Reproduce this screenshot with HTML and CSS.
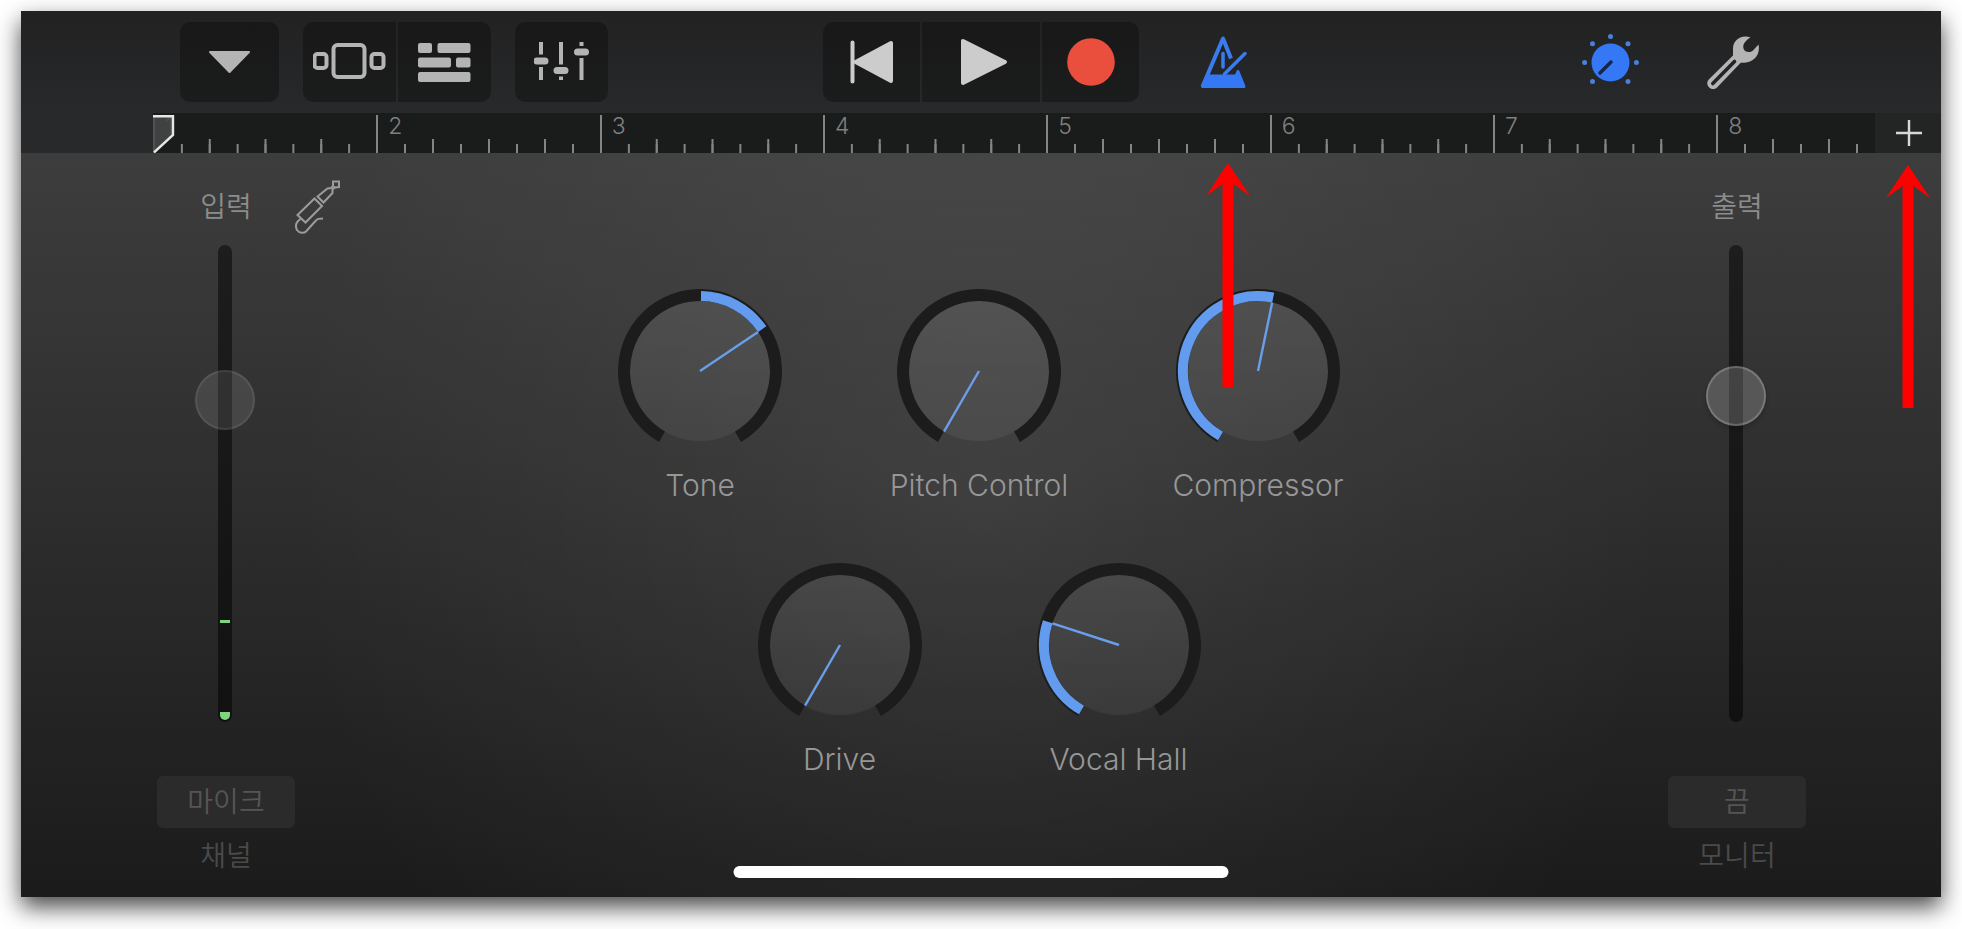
FILE: index.html
```html
<!DOCTYPE html>
<html lang="ko">
<head>
<meta charset="utf-8">
<meta name="viewport" content="width=device-width, initial-scale=1">
<title>GarageBand</title>
<link rel="stylesheet" href="styles.css">
</head>
<body>
<main class="app">
  <header class="toolbar">
    <div class="toolbar-left">
      <div class="group">
        <button class="tool tool-menu" type="button" aria-label="메뉴">
          <svg width="44" height="24" viewBox="0 0 44 24"><path d="M2 2H41L21.500 22z" fill="#b4b4b4" stroke="#b4b4b4" stroke-width="2" stroke-linejoin="round"/></svg>
        </button>
      </div>
      <div class="group">
        <button class="tool" type="button" aria-label="브라우저">
          <svg width="74" height="38" viewBox="1 1 74 38" fill="none" stroke="#b4b4b4" stroke-width="4"><rect x="2.500" y="12" width="12" height="14" rx="3"/><rect x="21.500" y="3" width="31" height="32" rx="4"/><rect x="59.500" y="12" width="12" height="14" rx="3"/></svg>
        </button>
        <button class="tool" type="button" aria-label="트랙">
          <svg width="53" height="39" viewBox="0 0 53 39" fill="#b4b4b4"><rect width="14" height="10" rx="2"/><rect x="19.500" width="33" height="10" rx="2"/><rect y="14.500" width="33" height="10" rx="2"/><rect x="38" y="14.500" width="14.500" height="10" rx="2"/><rect y="29" width="52.500" height="10" rx="2"/></svg>
        </button>
      </div>
      <div class="group">
        <button class="tool" type="button" aria-label="믹서">
          <svg width="56" height="40" viewBox="1 1 56 40" stroke="#b4b4b4" stroke-linecap="round" fill="none"><path stroke-width="4" stroke-linecap="butt" d="M8 1V13.500M8 26V39M28 1V23.500M28 35.500V39M48.500 1V5M48.500 17V39"/><path stroke-width="7" d="M4 20H12M24 29.500H32M44.500 11H52.500"/></svg>
        </button>
      </div>
    </div>
    <div class="group">
      <button class="tool tool-side" type="button" aria-label="처음으로">
        <svg width="44" height="44" viewBox="0 0 44 44" fill="#ccc" stroke="#ccc" stroke-linejoin="round" stroke-linecap="round"><path stroke-width="4" d="M2.500 2.500V41.500"/><path stroke-width="4" d="M5.500 22L41 3V41z"/></svg>
      </button>
      <button class="tool tool-play" type="button" aria-label="재생">
        <svg width="48" height="48" viewBox="0 0 48 48"><path d="M3 3V45L45 24z" fill="#ccc" stroke="#ccc" stroke-width="4" stroke-linejoin="round"/></svg>
      </button>
      <button class="tool tool-side" type="button" aria-label="녹음">
        <svg width="48" height="48" viewBox="0 0 48 48"><circle cx="24" cy="24" r="23.800" fill="#ea4f3e"/></svg>
      </button>
    </div>
    <div class="toolbar-right">
      <button class="plain" type="button" aria-label="메트로놈">
        <svg width="48" height="53" viewBox="0 0 48 53" fill="none" stroke="#3a7bf0" stroke-width="4" stroke-linecap="round" stroke-linejoin="round"><path d="M31 22.500L23 2.500L2.500 50.500" stroke-linecap="butt"/><path d="M23 17.500V31" stroke-width="3.500"/><path d="M45 17.500L24.500 38" stroke-width="3.500"/><path d="M7.500 40H36L38 35.500L44 50.500H2.500z" fill="#3478f6" stroke="#3478f6" stroke-width="3"/></svg>
      </button>
      <div class="toolbar-end">
        <button class="plain" type="button" aria-label="트랙 제어기">
          <svg width="57" height="57" viewBox="0 0 57 57" fill="#3478f6"><circle cx="28.500" cy="28.500" r="19"/><g fill="#4a80dc"><circle cx="28.500" cy="2.600" r="2.500"/><circle cx="10.500" cy="9.700" r="2.500"/><circle cx="46" cy="9.700" r="2.500"/><circle cx="2.600" cy="28.500" r="2.500"/><circle cx="54.400" cy="28.500" r="2.500"/><circle cx="10.500" cy="47.500" r="2.500"/><circle cx="46" cy="47.500" r="2.500"/></g><path d="M29 28L18 39" stroke="#16264a" stroke-width="3.500" stroke-linecap="round"/></svg>
        </button>
        <button class="plain" type="button" aria-label="설정">
          <svg width="53" height="53" viewBox="0 0 53 53"><path d="M43.500 1.200C33-2 26 5 26 12.500V19.500L2 43.200A5.700 5.700 0 0 0 10 51.500L33.700 26.700C45 28 54 20 51.500 8.500L46 14.500C42.500 17.500 37.500 16 36.500 12.500C35.500 8.500 37.500 5.500 43.500 1.200z" fill="#b4b4b4"/><path d="M27.500 25.500L5.800 47.500" stroke="#b4b4b4" stroke-width="5"/><path d="M27.500 25.500L5.800 47.500" stroke="#232425" stroke-width="3.600" stroke-linecap="round"/></svg>
        </button>
      </div>
    </div>
  </header>

  <div class="timeline">
    <div class="ruler">
      <ol class="bars">
        <li>1</li><li>2</li><li>3</li><li>4</li><li>5</li><li>6</li><li>7</li><li>8</li>
      </ol>
      <svg class="playhead" width="22" height="38" viewBox="0 0 22 38"><path d="M0 1H20V20L1 38H0z" fill="#464849" fill-opacity=".85"/><path d="M0 1.200H20V20L1 37.500" fill="none" stroke="#e6e6e2" stroke-width="2.400"/></svg>
    </div>
    <button class="plain add" type="button" aria-label="섹션 추가">
      <svg width="26" height="26" viewBox="0 0 26 26"><path d="M13 0V26M0 13H26" stroke="#d8d8d8" stroke-width="2.400"/></svg>
    </button>
  </div>

  <section class="panel">
    <div class="channel">
      <div class="channel-head">
        <label for="input-level">입력</label>
        <button class="plain jack" type="button" aria-label="입력 설정">
          <svg width="46" height="54" viewBox="0 0 46 54" fill="none" stroke="#9c9c9c" stroke-width="2"><path d="M38 1.500H44V7L40 7.500L38 6z"/><path d="M38 6L36 8L32.500 8.500L22.500 16.500L28.500 22.500L37.500 13V9.500L40 7.500"/><path d="M19.500 18.500L27 26L10.500 42.500L2.500 35z"/><path d="M5.500 39C1 42 0 46 2 50C4.500 53.500 9 53.500 11 51.500L20 41.500C22.500 38.500 24 38.500 28 38.500"/></svg>
        </button>
      </div>
      <div class="fader fader-input">
        <div class="track"><span class="peak"></span><span class="level"></span></div>
        <input id="input-level" type="range" min="0" max="100" value="70">
      </div>
      <button class="choice" id="channel" type="button">마이크</button>
      <label class="caption" for="channel">채널</label>
    </div>

    <div class="knobs">
      <div class="knob-row">
        <div class="knob">
          <div class="dial">
            <svg viewBox="0 0 164 164"><defs><linearGradient id="face" x1="0" y1="0" x2="0" y2="1"><stop offset="0" stop-color="#fff" stop-opacity=".085"/><stop offset="1" stop-color="#fff" stop-opacity=".055"/></linearGradient></defs><circle class="face" cx="82" cy="82" r="70"/><path class="rim" d="M44 147.800A76 76 0 1 1 120 147.800"/><path class="arc" d="M83 7A75 75 0 0 1 144.200 40.100"/><path class="needle" d="M82 82L140 42.900"/></svg>
            <input id="tone" type="range" min="0" max="100" value="69">
          </div>
          <label for="tone">Tone</label>
        </div>
        <div class="knob">
          <div class="dial">
            <svg viewBox="0 0 164 164"><circle class="face" cx="82" cy="82" r="70"/><path class="rim" d="M44 147.800A76 76 0 1 1 120 147.800"/><path class="needle" d="M82 82L47 142.600"/></svg>
            <input id="pitch" type="range" min="0" max="100" value="0">
          </div>
          <label for="pitch">Pitch Control</label>
        </div>
        <div class="knob">
          <div class="dial">
            <svg viewBox="0 0 164 164"><circle class="face" cx="82" cy="82" r="70"/><path class="rim" d="M44 147.800A76 76 0 1 1 120 147.800"/><path class="arc" d="M44.500 147A75 75 0 0 1 97.200 8.600"/><path class="needle" d="M82 82L96.200 13.500"/></svg>
            <input id="compressor" type="range" min="0" max="100" value="54">
          </div>
          <label for="compressor">Compressor</label>
        </div>
      </div>
      <div class="knob-row">
        <div class="knob">
          <div class="dial">
            <svg viewBox="0 0 164 164"><circle class="face" cx="82" cy="82" r="70"/><path class="rim" d="M44 147.800A76 76 0 1 1 120 147.800"/><path class="needle" d="M82 82L47 142.600"/></svg>
            <input id="drive" type="range" min="0" max="100" value="0">
          </div>
          <label for="drive">Drive</label>
        </div>
        <div class="knob">
          <div class="dial">
            <svg viewBox="0 0 164 164"><circle class="face" cx="82" cy="82" r="70"/><path class="rim" d="M44 147.800A76 76 0 1 1 120 147.800"/><path class="arc" d="M44.500 147A75 75 0 0 1 10.700 58.800"/><path class="needle" d="M82 82L15.400 60.400"/></svg>
            <input id="hall" type="range" min="0" max="100" value="26">
          </div>
          <label for="hall">Vocal Hall</label>
        </div>
      </div>
    </div>

    <div class="channel">
      <div class="channel-head">
        <label for="output-level">출력</label>
      </div>
      <div class="fader fader-output">
        <div class="track"></div>
        <input id="output-level" type="range" min="0" max="100" value="71">
      </div>
      <button class="choice" id="monitor" type="button">끔</button>
      <label class="caption" for="monitor">모니터</label>
    </div>
  </section>

  <div class="home-indicator"></div>
  <svg class="pointer pointer-metronome" width="44" height="224" viewBox="0 0 44 224"><path d="M22 0L44 33L27.500 21V224H16.500V21L0 33z" fill="#f00"/></svg>
  <svg class="pointer pointer-add" width="44" height="243" viewBox="0 0 44 243"><path d="M22 0L44 33L27.500 21V243H16.500V21L0 33z" fill="#f00"/></svg>
</main>
</body>
</html>
```
FILE: styles.css
```css
* {
  box-sizing: border-box;
}

body {
  margin: 0;
  min-height: 100vh;
  display: flex;
  padding: 11px 21px 32px;
  background: #fff;
  font-family: Inter, "Noto Sans CJK KR", sans-serif;
  font-weight: 300;
}

svg {
  display: block;
}

button {
  border: 0;
  padding: 0;
  font: inherit;
  cursor: pointer;
}

.app {
  position: relative;
  flex: 1;
  display: flex;
  flex-direction: column;
  box-shadow: 0 10px 22px rgba(0, 0, 0, 0.72);
}

/* Toolbar */

.toolbar {
  display: grid;
  grid-template-columns: 1fr auto 1fr;
  align-items: center;
  height: 102px;
  background: linear-gradient(#222, #242526 50%, #27292b);
}

.toolbar-left {
  display: flex;
  gap: 24px;
  padding-left: 159px;
}

.toolbar-right {
  display: flex;
  justify-content: space-between;
  align-items: center;
  padding: 0 181px 0 61px;
}

.toolbar-end {
  display: flex;
  align-items: center;
  gap: 68px;
}

.group {
  display: flex;
  gap: 2px;
  border-radius: 10px;
  overflow: hidden;
}

.tool {
  display: grid;
  place-items: center;
  width: 93px;
  height: 80px;
  background: linear-gradient(#181818, #1b1c1c);
}

.tool-menu {
  width: 99px;
}

.tool-play {
  width: 118px;
  padding-left: 6px;
}

.tool-side {
  width: 97px;
}

.plain {
  background: none;
}

/* Timeline */

.timeline {
  display: flex;
  height: 40px;
  padding-left: 132px;
  background: #27292b;
}

.ruler {
  position: relative;
  flex: 1;
  min-width: 0;
  overflow-x: clip;
  background: #1a1b1b;
}

.bars {
  display: grid;
  grid-auto-flow: column;
  grid-auto-columns: 12.97%;
  height: 100%;
  margin: 0;
  padding: 0;
  list-style: none;
}

.bars li {
  padding-left: 12px;
  color: #808080;
  font-size: 23px;
  font-weight: 300;
  line-height: 26px;
  background:
    linear-gradient(90deg, #848484 2px, transparent 2px) 0 100% / 100% 38px no-repeat,
    linear-gradient(90deg, #848484 2px, transparent 2px) 0 100% / 25% 14px repeat-x,
    linear-gradient(90deg, #848484 2px, transparent 2px) 0 100% / 12.5% 9px repeat-x;
}

.playhead {
  position: absolute;
  left: 0;
  bottom: 0;
}

.add {
  display: grid;
  place-items: center;
  width: 66px;
  padding-left: 2px;
  background: #232525;
}

/* Instrument panel */

.panel {
  flex: 1;
  display: grid;
  grid-template-columns: 138px 1fr 138px;
  padding: 0 135px 0 136px;
  background:
    radial-gradient(ellipse 36% 100% at 50% 45%, rgba(255, 255, 255, 0.08), transparent),
    linear-gradient(#3d3d3d, #303030 40%, #1b1b1b);
}

.channel {
  display: flex;
  flex-direction: column;
  align-items: center;
  padding: 36px 0 23px;
  color: #8c8c8c;
  font-size: 28px;
  font-weight: 350;
  line-height: 36px;
}

.channel-head {
  position: relative;
  width: 100%;
  height: 36px;
  margin-bottom: 20px;
  text-align: center;
}

.channel-head label {
  display: block;
}

.jack {
  position: absolute;
  left: 100%;
  top: 50%;
  transform: translateY(-50%);
}

.fader {
  flex: 1;
  display: grid;
  justify-items: center;
  min-height: 240px;
  padding-right: 3px;
}

.fader > * {
  grid-area: 1 / 1;
}

.track {
  display: flex;
  flex-direction: column;
  justify-content: flex-end;
  gap: 89px;
  width: 14px;
  padding: 2px;
  border-radius: 7px;
  background: linear-gradient(#1d1d1d, #111);
}

.peak {
  height: 3px;
  background: #7fd47f;
}

.level {
  height: 8px;
  border-radius: 0 0 5px 5px;
  background: #7fd47f;
}

.fader input {
  appearance: none;
  writing-mode: vertical-lr;
  direction: rtl;
  width: 60px;
  height: 100%;
  margin: 0;
  background: none;
}

.fader input::-webkit-slider-thumb {
  appearance: none;
  width: 60px;
  height: 60px;
  border: 2px solid rgba(255, 255, 255, 0.08);
  border-radius: 50%;
  background: rgba(255, 255, 255, 0.1);
}

.fader-output input::-webkit-slider-thumb {
  border-color: rgba(255, 255, 255, 0.2);
  background: rgba(255, 255, 255, 0.18);
  box-shadow: 0 3px 5px rgba(0, 0, 0, 0.2);
}

.choice {
  width: 100%;
  height: 52px;
  margin: 54px 0 10px;
  border-radius: 6px;
  background: #2b2b2b;
  color: #555;
}

.caption {
  height: 36px;
  color: #4a4a4a;
}

.knobs {
  display: flex;
  flex-direction: column;
  gap: 58px;
  padding: 136px 5px 0 0;
}

.knob-row {
  display: flex;
  justify-content: center;
}

.knob {
  display: flex;
  flex-direction: column;
  align-items: center;
  gap: 12px;
  width: 279px;
  color: #979797;
  font-size: 30px;
  line-height: 40px;
}

.dial {
  display: grid;
  width: 164px;
  height: 164px;
}

.dial > * {
  grid-area: 1 / 1;
}

.dial input {
  width: 100%;
  margin: 0;
  opacity: 0;
}

.face {
  fill: url(#face);
}

.rim {
  fill: none;
  stroke: #1c1c1c;
  stroke-width: 12;
}

.arc {
  fill: none;
  stroke: #639cef;
  stroke-width: 10;
}

.needle {
  stroke: #6a9eea;
  stroke-width: 2.4;
}

/* Overlays */

.home-indicator {
  position: absolute;
  left: 50%;
  bottom: 19px;
  width: 495px;
  height: 12px;
  border-radius: 6px;
  background: #fff;
  transform: translateX(-50%);
}

.pointer {
  position: absolute;
  pointer-events: none;
}

.pointer-metronome {
  left: calc(50% + 225px);
  top: 152px;
}

.pointer-add {
  right: 11px;
  top: 154px;
}
```
